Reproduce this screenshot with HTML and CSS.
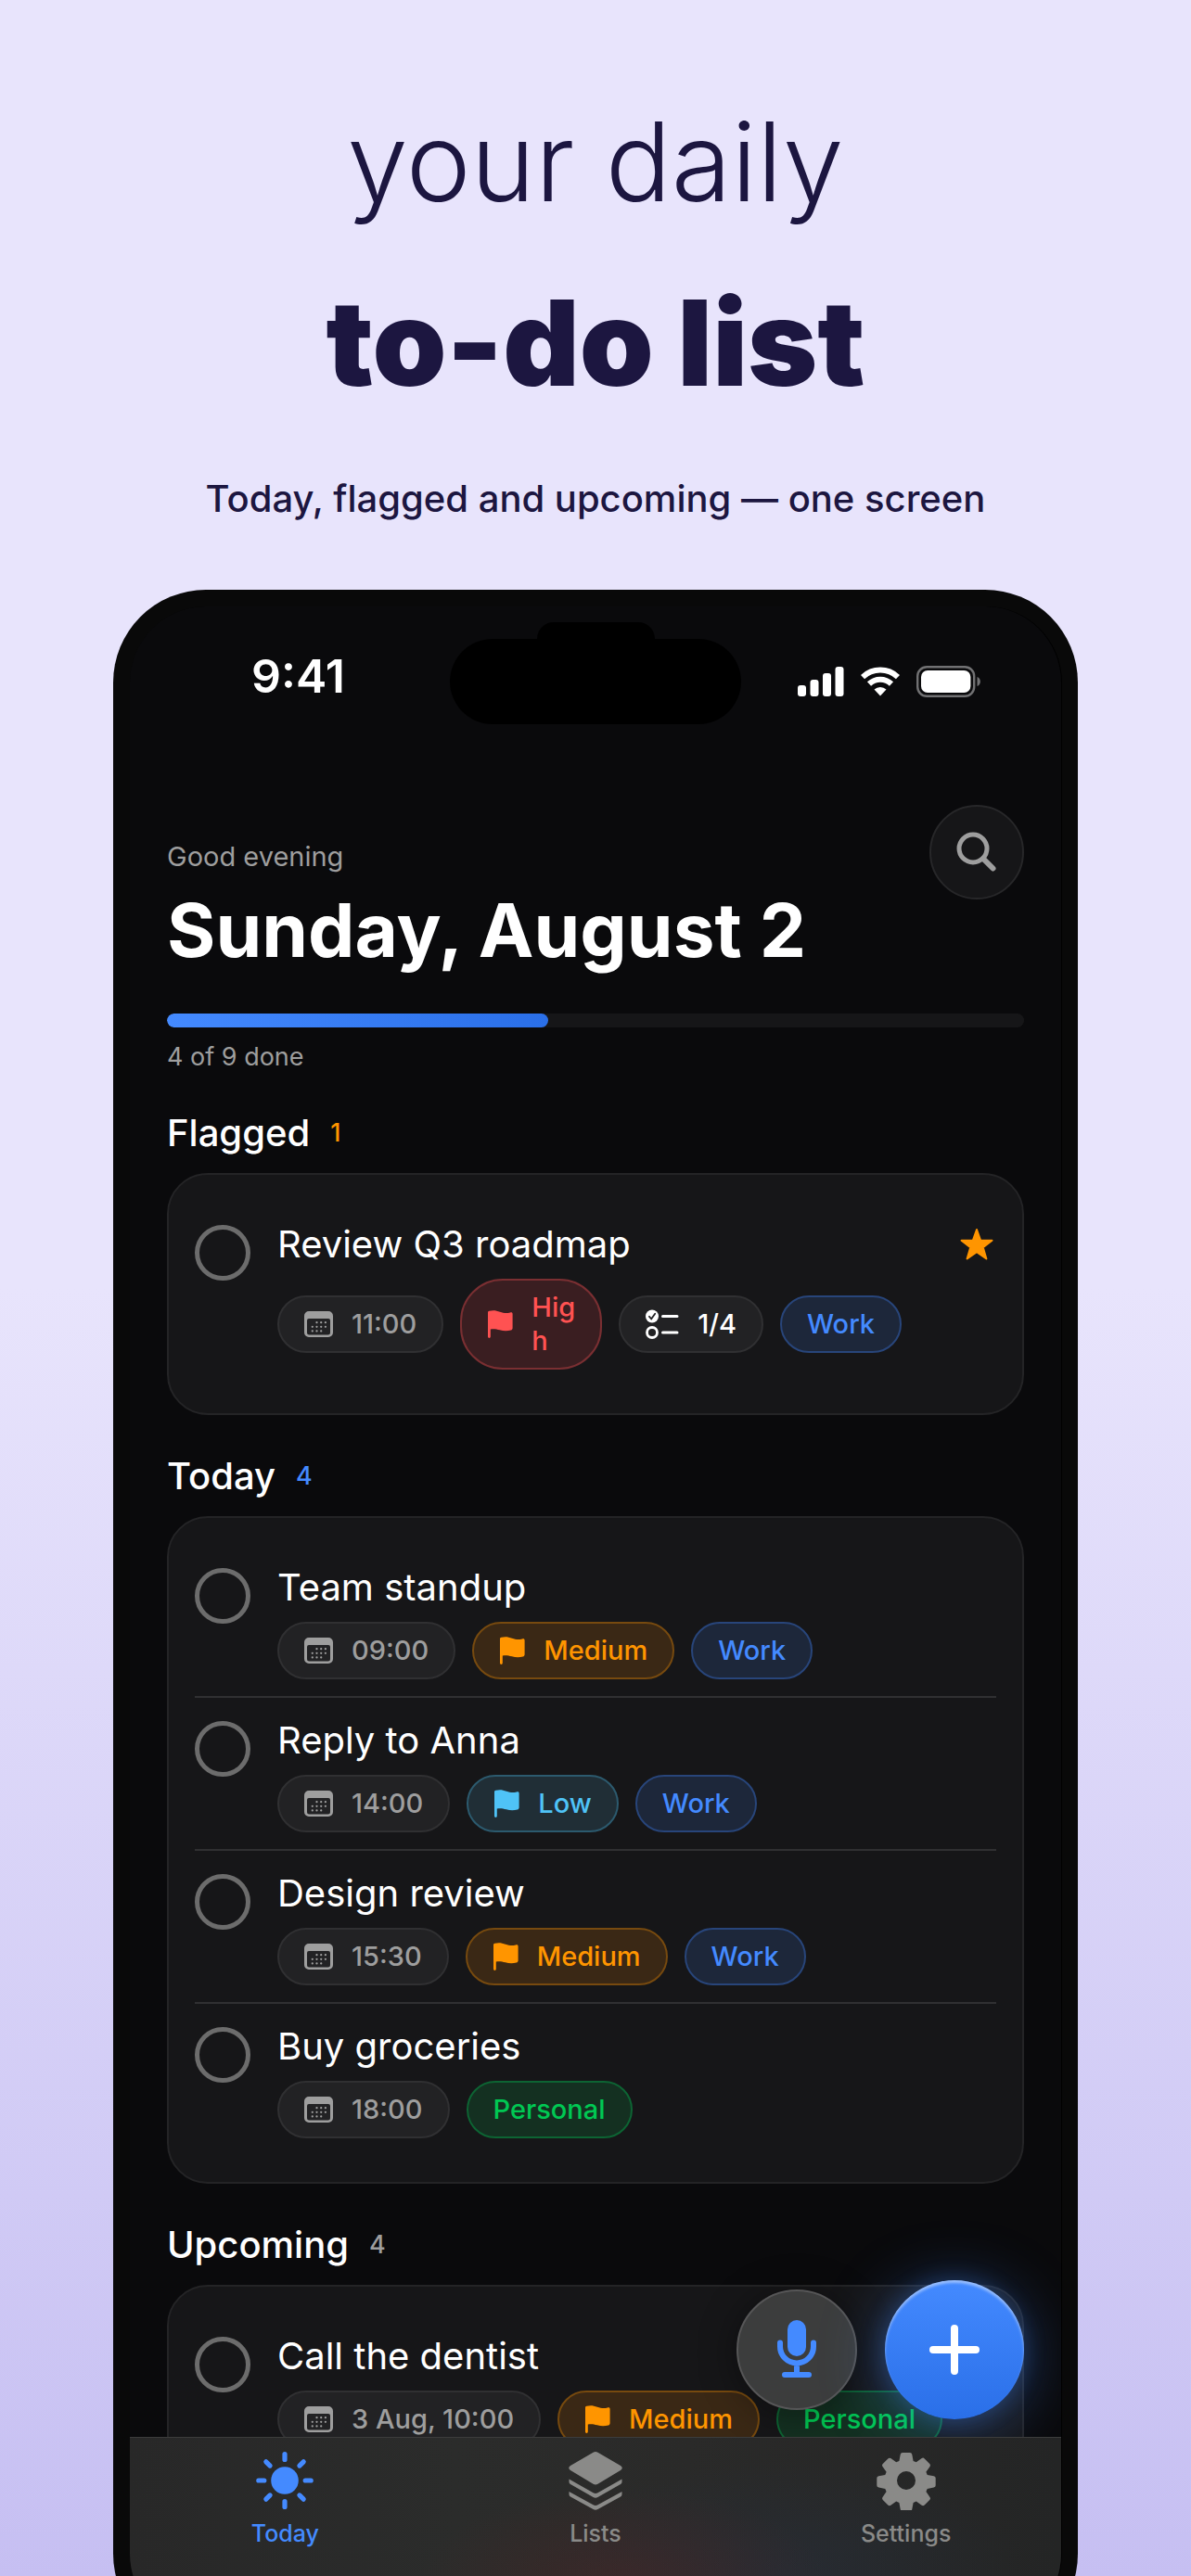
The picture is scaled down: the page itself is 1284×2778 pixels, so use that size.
FILE: index.html
```html
<!DOCTYPE html>
<html lang="en">
<head>
<meta charset="utf-8">
<meta name="viewport" content="width=device-width, initial-scale=1">
<title>Your daily to-do list</title>
<link rel="stylesheet" href="styles.css">
</head>
<body>
<svg class="sprite" aria-hidden="true">
  <symbol id="i-calendar" viewBox="0 0 31 30">
    <path fill="currentColor" fill-rule="evenodd" d="M5 1h21a5 5 0 0 1 5 5v18a5 5 0 0 1-5 5H5a5 5 0 0 1-5-5V6a5 5 0 0 1 5-5zM5 9a2 2 0 0 0-2 2v13a2.500 2.500 0 0 0 2.500 2.500h20a2.500 2.500 0 0 0 2.500-2.500V11a2 2 0 0 0-2-2z"/>
    <path stroke="currentColor" stroke-width="2.300" stroke-linecap="round" stroke-dasharray="0 4.700" d="M13.500 13.200h9.600M8.800 17.800h14.300M8.800 22.400h9.600"/>
  </symbol>
  <symbol id="i-flag" viewBox="0 0 28 30">
    <path fill="currentColor" d="M1 2.500C1 1.300 1.500 1 2.500.800 7-.500 10 .300 14 1.700c4 1.300 7 1.600 11 .700 1.600-.400 2.600 0 2.600 1.500V19c0 1.400-.500 2.100-1.800 2.500-4 1.200-8 1-12-.200-4-1.200-7-1.500-10-.700V28.500a1.400 1.400 0 0 1-2.800 0z"/>
  </symbol>
  <symbol id="i-checklist" viewBox="0 0 36 32">
    <circle cx="7" cy="7.500" r="7" fill="currentColor"/>
    <path d="M4 7.800l2.200 2.500 4-5.500" fill="none" stroke="#222224" stroke-width="1.800" stroke-linecap="round"/>
    <circle cx="7" cy="25" r="5.500" fill="none" stroke="currentColor" stroke-width="2.800"/>
    <path d="M18.500 7.500h15.500M18.500 25h15.500" stroke="currentColor" stroke-width="3" stroke-linecap="round"/>
  </symbol>
  <symbol id="i-star" viewBox="0 0 36 36">
    <path fill="currentColor" stroke="currentColor" stroke-width="2" stroke-linejoin="round" d="M18 2l4.200 11.800H34.500L24.800 21.300l3.600 12.200L18 26.300 7.600 33.500l3.600-12.200L1.500 13.800h12.300z"/>
  </symbol>
</svg>

<main class="stage">
  <header class="promo">
    <h1 class="promo-title"><span class="promo-light">your daily</span><span class="promo-heavy">to-do list</span></h1>
    <p class="promo-sub">Today, flagged and upcoming — one screen</p>
  </header>

  <div class="phone">
    <div class="screen">
      <div class="status">
        <div class="status-time">9:41</div>
        <div class="island"></div>
        <div class="status-icons">
          <svg width="50" height="32" viewBox="0 0 50 32" fill="#fff" aria-label="Signal"><rect x="0" y="20" width="9" height="12" rx="3"/><rect x="13.500" y="14" width="9" height="18" rx="3"/><rect x="27" y="7" width="9" height="25" rx="3"/><rect x="40.500" y="0" width="9" height="32" rx="3"/></svg>
          <svg width="42" height="32" viewBox="0 0 42 32" aria-label="Wi-Fi"><g fill="none" stroke="#fff" stroke-width="6"><path d="M2 11.200a27.500 27.500 0 0 1 38 0"/><path d="M9 18.500a17.400 17.400 0 0 1 24 0"/></g><path fill="#fff" d="M14.500 24.500a9.500 9.500 0 0 1 13 0L21 31.500z"/></svg>
          <svg width="70" height="34" viewBox="0 0 70 34" aria-label="Battery"><rect x="1.200" y="1.200" width="61" height="31.600" rx="10" fill="none" stroke="#717173" stroke-width="2.400"/><rect x="5" y="5" width="53.400" height="24" rx="7" fill="#fff"/><path d="M65.500 12c4.500 1.500 4.500 8.500 0 10z" fill="#717173"/></svg>
        </div>
      </div>

      <div class="content">
        <header class="head">
          <div class="head-text">
            <p class="greeting">Good evening</p>
            <h2 class="date">Sunday, August 2</h2>
          </div>
          <button class="search" type="button" aria-label="Search">
            <svg width="44" height="44" viewBox="0 0 44 44" fill="none" stroke="#9e9e9e" stroke-width="5"><circle cx="18" cy="18" r="15"/><path d="M29 29l10.500 10.500" stroke-width="6" stroke-linecap="round"/></svg>
          </button>
        </header>
        <progress class="bar" value="4" max="9" aria-labelledby="done">4 of 9</progress>
        <p class="done" id="done">4 of 9 done</p>

        <section class="group">
          <h3 class="group-title">Flagged <span class="count orange">1</span></h3>
          <ul class="card">
            <li class="task">
              <input class="check" type="checkbox" id="t1">
              <div class="task-body">
                <label class="task-title" for="t1">Review Q3 roadmap</label>
                <div class="chips">
                  <span class="chip muted"><svg class="ico"><use href="#i-calendar"/></svg>11:00</span>
                  <span class="chip high"><svg class="ico flag"><use href="#i-flag"/></svg><span>Hig<br>h</span></span>
                  <span class="chip plain"><svg class="ico list"><use href="#i-checklist"/></svg>1/4</span>
                  <span class="chip work">Work</span>
                </div>
              </div>
              <svg class="star" aria-label="Flagged"><use href="#i-star"/></svg>
            </li>
          </ul>
        </section>

        <section class="group">
          <h3 class="group-title">Today <span class="count blue">4</span></h3>
          <ul class="card">
            <li class="task">
              <input class="check" type="checkbox" id="t2">
              <div class="task-body">
                <label class="task-title" for="t2">Team standup</label>
                <div class="chips">
                  <span class="chip muted"><svg class="ico"><use href="#i-calendar"/></svg>09:00</span>
                  <span class="chip medium"><svg class="ico flag"><use href="#i-flag"/></svg>Medium</span>
                  <span class="chip work">Work</span>
                </div>
              </div>
            </li>
            <li class="task">
              <input class="check" type="checkbox" id="t3">
              <div class="task-body">
                <label class="task-title" for="t3">Reply to Anna</label>
                <div class="chips">
                  <span class="chip muted"><svg class="ico"><use href="#i-calendar"/></svg>14:00</span>
                  <span class="chip low"><svg class="ico flag"><use href="#i-flag"/></svg>Low</span>
                  <span class="chip work">Work</span>
                </div>
              </div>
            </li>
            <li class="task">
              <input class="check" type="checkbox" id="t4">
              <div class="task-body">
                <label class="task-title" for="t4">Design review</label>
                <div class="chips">
                  <span class="chip muted"><svg class="ico"><use href="#i-calendar"/></svg>15:30</span>
                  <span class="chip medium"><svg class="ico flag"><use href="#i-flag"/></svg>Medium</span>
                  <span class="chip work">Work</span>
                </div>
              </div>
            </li>
            <li class="task">
              <input class="check" type="checkbox" id="t5">
              <div class="task-body">
                <label class="task-title" for="t5">Buy groceries</label>
                <div class="chips">
                  <span class="chip muted"><svg class="ico"><use href="#i-calendar"/></svg>18:00</span>
                  <span class="chip personal">Personal</span>
                </div>
              </div>
            </li>
          </ul>
        </section>

        <section class="group">
          <h3 class="group-title">Upcoming <span class="count gray">4</span></h3>
          <ul class="card">
            <li class="task">
              <input class="check" type="checkbox" id="t6">
              <div class="task-body">
                <label class="task-title" for="t6">Call the dentist</label>
                <div class="chips">
                  <span class="chip muted"><svg class="ico"><use href="#i-calendar"/></svg>3 Aug, 10:00</span>
                  <span class="chip medium"><svg class="ico flag"><use href="#i-flag"/></svg>Medium</span>
                  <span class="chip personal">Personal</span>
                </div>
              </div>
            </li>
          </ul>
        </section>

        <div class="fabs">
          <button class="fab mic" type="button" aria-label="Dictate a task">
            <svg width="44" height="66" viewBox="0 0 44 66" fill="none" stroke="#448aff" stroke-width="6" stroke-linecap="round"><rect x="12" y="1" width="20" height="39" rx="10" fill="#448aff" stroke="none"/><path d="M4 25.500v4a18 18 0 0 0 36 0v-4M22 48v10M9 60h26"/></svg>
          </button>
          <button class="fab add" type="button" aria-label="Add a task">
            <svg width="54" height="54" viewBox="0 0 54 54" stroke="#fff" stroke-width="8" stroke-linecap="round"><path d="M27 4v46M4 27h46"/></svg>
          </button>
        </div>
      </div>

      <nav class="tabs">
        <a class="tab active" href="#today">
          <svg width="64" height="64" viewBox="0 0 64 64"><circle cx="32" cy="32" r="14.800" fill="currentColor"/><g stroke="currentColor" stroke-width="5.200" stroke-linecap="round"><path d="M32 3.500v6M32 54.500v6M3.800 32h6M54.200 32h6M11.800 11.800l4.300 4.300M47.900 47.900l4.300 4.300M52.200 11.800l-4.300 4.300M16.100 47.900l-4.300 4.300"/></g></svg>
          Today
        </a>
        <a class="tab" href="#lists">
          <svg width="64" height="64" viewBox="0 0 64 64" fill="currentColor"><path d="M29.500 1.800q2.500-1.500 5 0L59 16q3.500 2.500 0 5L34.500 35.800q-2.500 1.500-5 0L5 21q-3.500-2.500 0-5z"/><path d="M3.500 30.500v3q0 1.700 1.500 2.600L29.500 50q2.500 1.500 5 0L59 36.100q1.500-.900 1.500-2.600v-3L34.500 45.200q-2.500 1.400-5 0z"/><path d="M3.500 44v3q0 1.700 1.500 2.600L29.500 63q2.500 1.500 5 0L59 49.600q1.500-.900 1.500-2.600v-3L34.500 58.200q-2.500 1.400-5 0z"/></svg>
          Lists
        </a>
        <a class="tab" href="#settings">
          <svg width="64" height="64" viewBox="0 0 64 64"><path fill="currentColor" fill-rule="evenodd" d="M28 2h8q2 0 2.300 2l1.300 7 3.200 1.300 5.900-4.200q1.600-1.100 3 .300l5.500 5.500q1.300 1.400.300 3l-4.100 5.900 1.300 3.200 7 1.200q2 .400 2 2.300v7.800q0 2-2 2.300l-7 1.300-1.300 3.200 4.100 5.900q1.100 1.600-.300 3l-5.500 5.500q-1.400 1.300-3 .300l-5.900-4.200-3.200 1.300-1.300 7q-.300 2-2.300 2h-8q-2 0-2.300-2l-1.300-7-3.200-1.300-5.900 4.200q-1.600 1.100-3-.300l-5.500-5.500q-1.300-1.400-.300-3l4.100-5.900-1.300-3.200-7-1.300q-2-.300-2-2.300v-7.800q0-2 2-2.300l7-1.200 1.300-3.200-4.100-5.900q-1.100-1.600.300-3l5.500-5.500q1.400-1.300 3-.300l5.900 4.200 3.200-1.300 1.300-7Q26 2 28 2zM32 22a10 10 0 1 0 0 20 10 10 0 0 0 0-20z"/></svg>
          Settings
        </a>
      </nav>
    </div>
  </div>
</main>
</body>
</html>
```

FILE: styles.css
```css
* { box-sizing: border-box; }

body {
  margin: 0;
  font-family: Inter, "Liberation Sans", sans-serif;
  color: #fff;
}

h1, h2, h3, p, ul { margin: 0; padding: 0; }
ul { list-style: none; }
button { padding: 0; font: inherit; }
svg { display: block; flex: none; }

.sprite { position: absolute; width: 0; height: 0; }

.stage {
  display: flex;
  flex-direction: column;
  height: 100vh;
  overflow: hidden;
  background: linear-gradient(180deg, #e8e4fc 0%, #e8e4fc 50%, #c6bff2 100%);
}

/* Headline */
.promo {
  flex: none;
  padding: 76px 0 68px;
  text-align: center;
  color: #1c1640;
}
.promo-title { line-height: 196px; }
.promo-title span { display: block; }
.promo-light { font-size: 118px; font-weight: 300; }
.promo-heavy { font-size: 128px; font-weight: 900; }
.promo-sub {
  margin-top: 40px;
  font-size: 40px;
  line-height: 60px;
  font-weight: 500;
}

/* Device */
.phone {
  display: flex;
  flex: 1;
  min-height: 0;
  margin: 0 122px -76px;
  padding: 18px;
  border-radius: 100px;
  background: #090909;
  overflow: hidden;
}
.screen {
  display: flex;
  flex: 1;
  flex-direction: column;
  min-width: 0;
  border-radius: 82px;
  background: #0a0a0c;
  box-shadow: 1px 0 0 #000;
  overflow: hidden;
}

.status {
  display: grid;
  flex: none;
  grid-template-columns: 1fr 314px 1fr;
  align-items: center;
  padding-top: 35px;
}
.status-time {
  padding: 0 0 12px 18px;
  font-size: 50px;
  line-height: 60px;
  font-weight: 600;
  text-align: center;
}
.island {
  position: relative;
  height: 92px;
  border-radius: 46px;
  background: #000;
}
.island::before {
  content: "";
  position: absolute;
  top: -18px;
  left: 94px;
  width: 127px;
  height: 40px;
  border-radius: 18px;
  background: #000;
}
.status-icons {
  display: flex;
  justify-content: center;
  align-items: center;
  gap: 18px;
  padding-right: 26px;
}

.content {
  position: relative;
  flex: 1;
  min-height: 0;
  padding: 87px 40px 0;
  overflow: hidden;
}
.head {
  display: flex;
  justify-content: space-between;
  align-items: flex-start;
}
.head-text { padding-top: 38px; }
.greeting {
  font-size: 29px;
  line-height: 36px;
  color: #9e9e9e;
}
.date {
  margin-top: 11px;
  font-size: 80px;
  line-height: 100px;
  font-weight: 700;
}
.search {
  display: grid;
  place-items: center;
  width: 102px;
  height: 102px;
  border: 2px solid #272729;
  border-radius: 50%;
  background: #161618;
}
.bar {
  display: block;
  width: 100%;
  height: 15px;
  margin-top: 40px;
  border: 0;
  border-radius: 8px;
  background: #161618;
  appearance: none;
  overflow: hidden;
}
.bar::-webkit-progress-bar { border-radius: 8px; background: #161618; }
.bar::-webkit-progress-value {
  border-radius: 8px;
  background: linear-gradient(90deg, #448aff, #2a6fe8);
}
.done {
  margin-top: 16px;
  font-size: 27px;
  line-height: 32px;
  color: #9e9e9e;
}

/* Task groups */
.group { margin-top: 40px; }
.group-title {
  display: flex;
  align-items: center;
  gap: 22px;
  font-size: 40px;
  line-height: 52px;
  font-weight: 500;
}
.count { font-size: 27px; line-height: 48px; font-weight: 500; }
.orange { color: #ff9500; }
.blue { color: #448aff; }
.gray { color: #9e9e9e; }

.card {
  margin-top: 17px;
  padding: 29px 28px;
  border: 2px solid #242426;
  border-radius: 44px;
  background: #161618;
}
.task {
  display: flex;
  align-items: flex-start;
  padding: 19px 0 18px;
}
.task + .task { border-top: 2px solid #303032; }
.check {
  flex: none;
  width: 60px;
  height: 60px;
  margin: 6px 29px 0 0;
  border: 5px solid #6c6c6c;
  border-radius: 50%;
  appearance: none;
}
.task-body { flex: 1; min-width: 0; }
.task-title {
  display: block;
  font-size: 40px;
  line-height: 54px;
}
.chips {
  display: flex;
  align-items: center;
  gap: 18px;
  margin-top: 10px;
}
.chip {
  display: flex;
  align-items: center;
  gap: 20px;
  padding: 11px 27px;
  border: 2px solid;
  border-radius: 46px;
  font-size: 29px;
  line-height: 36px;
  font-weight: 500;
  white-space: nowrap;
}
.ico { width: 31px; height: 30px; }
.flag { width: 28px; }
.list { width: 36px; height: 32px; }
.muted { color: #9e9e9e; background: #222224; border-color: #303032; }
.plain { color: #fff; background: #222224; border-color: #303032; }
.high { color: #ff5252; background: #3a1e21; border-color: #7a2f32; }
.medium { color: #ff9500; background: #3a2815; border-color: #774a0f; }
.low { color: #4fc3f7; background: #202e36; border-color: #2c5a6e; }
.work { color: #448aff; background: #1d273a; border-color: #28457a; }
.personal { color: #00c853; background: #143021; border-color: #0d6433; }
.star { width: 36px; height: 36px; margin: 9px 3px 0 0; color: #ff9500; }

/* Floating buttons */
.fabs {
  position: absolute;
  right: 40px;
  bottom: 19px;
  display: flex;
  align-items: center;
  gap: 30px;
}
.fab {
  display: grid;
  place-items: center;
  border-radius: 50%;
}
.mic {
  width: 130px;
  height: 130px;
  border: 2px solid #565657;
  background: #3c3d3d;
  box-shadow: 0 4px 40px rgba(0, 0, 0, 0.4);
}
.add {
  width: 150px;
  height: 150px;
  border: 0;
  background: linear-gradient(180deg, #448aff, #2a6fe8);
  box-shadow: 0 8px 70px rgba(68, 138, 255, 0.4), 0 0 24px rgba(68, 138, 255, 0.25), inset 0 3px 3px rgba(255, 255, 255, 0.45);
}

/* Tab bar */
.tabs {
  display: grid;
  flex: none;
  grid-template-columns: repeat(3, 1fr);
  align-items: start;
  height: 208px;
  padding-top: 14px;
  border-top: 1px solid #3c3c3c;
  background:
    radial-gradient(220px 100px at 53% 75%, rgba(90, 35, 35, 0.35), transparent),
    radial-gradient(260px 120px at 70% 70%, rgba(35, 50, 75, 0.3), transparent),
    linear-gradient(90deg, #282828, #2b2c2b 35%, #2a2a29 60%, #242525);
}
.tab {
  display: flex;
  flex-direction: column;
  align-items: center;
  gap: 9px;
  font-size: 25px;
  line-height: 32px;
  font-weight: 500;
  color: #8a8a88;
  text-decoration: none;
}
.active { color: #448aff; }
```
